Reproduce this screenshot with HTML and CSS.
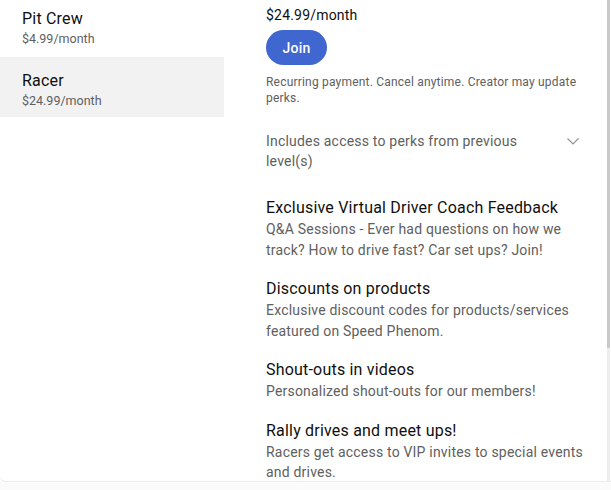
FILE: index.html
```html
<!DOCTYPE html>
<html>
<head>
  <meta charset="utf-8">
  <title>Memberships</title>
  <link rel="stylesheet" href="styles.css">
</head>
<body>
  <main class="dialog">
    <nav class="levels">
      <div class="level">
        <div class="level-name">Pit Crew</div>
        <div class="level-price">$4.99/month</div>
      </div>
      <div class="level selected">
        <div class="level-name">Racer</div>
        <div class="level-price">$24.99/month</div>
      </div>
    </nav>

    <section class="details">
      <div class="price">$24.99/month</div>
      <button class="join">Join</button>
      <p class="fine-print">Recurring payment. Cancel anytime. Creator may update perks.</p>

      <div class="includes">
        <span>Includes access to perks from previous level(s)</span>
        <svg viewBox="0 0 24 24" width="24" height="24"><path d="M6.5 9.5l5.5 5.5 5.5-5.5" fill="none" stroke="#909090" stroke-width="1.1"/></svg>
      </div>

      <div class="perks">
        <div class="perk">
          <h3>Exclusive Virtual Driver Coach Feedback</h3>
          <p>Q&amp;A Sessions - Ever had questions on how we track? How to drive fast? Car set ups? Join!</p>
        </div>
        <div class="perk">
          <h3>Discounts on products</h3>
          <p>Exclusive discount codes for products/services featured on Speed Phenom.</p>
        </div>
        <div class="perk">
          <h3>Shout-outs in videos</h3>
          <p>Personalized shout-outs for our members!</p>
        </div>
        <div class="perk">
          <h3>Rally drives and meet ups!</h3>
          <p>Racers get access to VIP invites to special events and drives.</p>
        </div>
      </div>
    </section>

    <div class="scrollbar"><div class="thumb"></div></div>
  </main>
</body>
</html>
```

FILE: styles.css
```css
* {
  box-sizing: border-box;
}

body {
  margin: 0;
  background: #fbfbfb;
  font-family: Roboto, "Liberation Sans", sans-serif;
  color: #0f0f0f;
  letter-spacing: 0.2px;
}

.dialog {
  width: 611px;
  height: 482px;
  display: flex;
  background: #fff;
  border-bottom: 1px solid #ececec;
  border-bottom-left-radius: 6px;
  overflow: hidden;
}

.levels {
  width: 224px;
  flex-shrink: 0;
  margin-top: -3px;
}

.level {
  height: 60px;
  padding: 11px 22px 0;
}

.level.selected {
  padding-top: 13px;
  background: #f2f2f2;
}

.level-name {
  font-size: 16px;
  line-height: 22px;
}

.level-price {
  font-size: 12.5px;
  line-height: 18px;
  letter-spacing: 0;
  color: #606060;
}

.details {
  flex: 1;
  padding: 5px 0 0 42px;
}

.details > * {
  width: 326px;
}

.price {
  font-size: 14px;
  line-height: 20px;
}

.join {
  display: block;
  width: 61px;
  height: 35px;
  margin-top: 5px;
  border: 0;
  border-radius: 18px;
  background: #4066cf;
  color: #fff;
  font-family: inherit;
  font-size: 14px;
  font-weight: 500;
  letter-spacing: 0.2px;
}

.fine-print {
  margin: 9px 0 0;
  font-size: 12px;
  line-height: 16px;
  color: #606060;
}

.includes {
  display: flex;
  align-items: flex-start;
  gap: 16px;
  margin-top: 25px;
  font-size: 14px;
  line-height: 20px;
  color: #606060;
}

.includes span {
  flex: 1;
}

.includes svg {
  flex-shrink: 0;
  margin-top: -2px;
  margin-right: 7px;
}

.perks {
  display: flex;
  flex-direction: column;
  gap: 18px;
  margin-top: 26px;
}

.perk h3 {
  margin: 0;
  font-size: 16px;
  font-weight: 400;
  line-height: 22px;
}

.perk p {
  margin: 0;
  font-size: 14px;
  line-height: 20.5px;
  color: #606060;
}

.scrollbar {
  width: 3px;
  margin-right: 1px;
  flex-shrink: 0;
  background: #ededed;
}

.thumb {
  height: 348px;
  background: #c9c9c9;
}
```
